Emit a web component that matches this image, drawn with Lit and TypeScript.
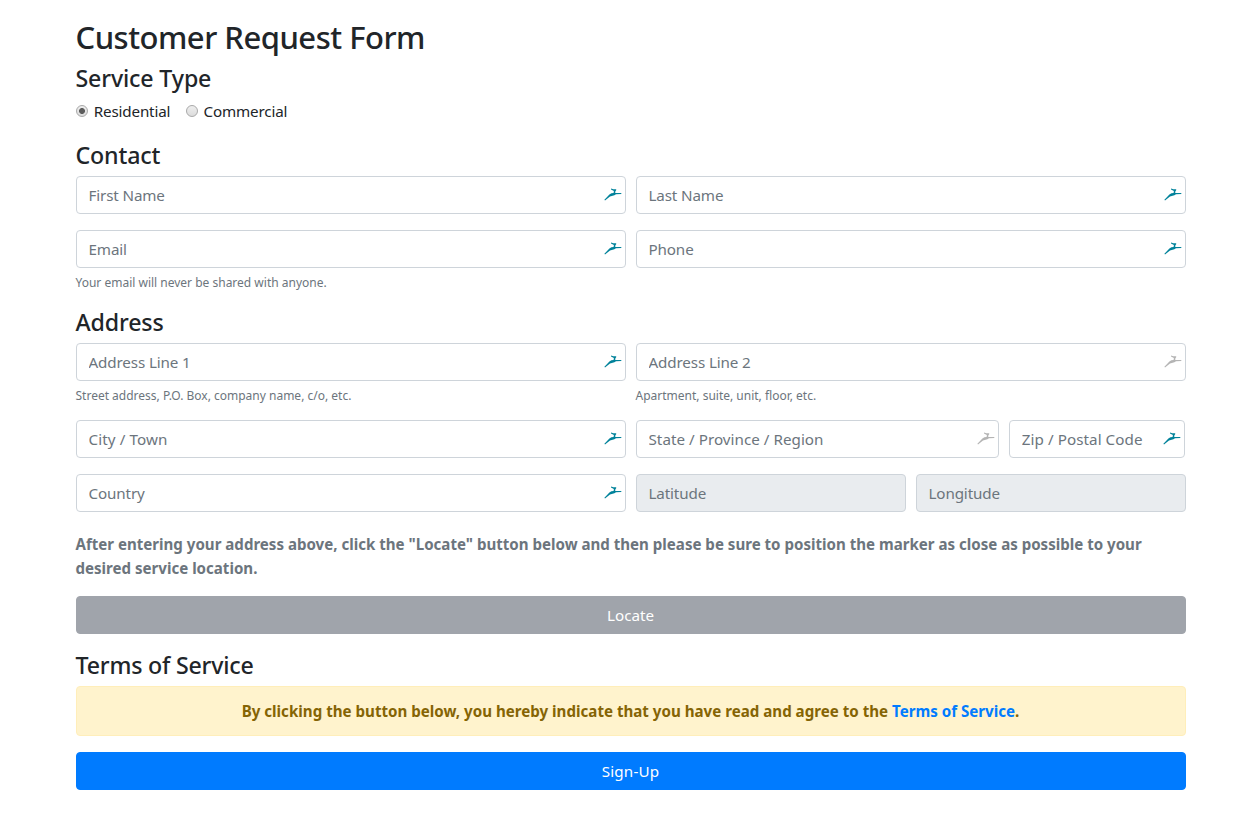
import { LitElement, html, css, nothing } from "lit";
import { customElement, property } from "lit/decorators.js";
import { classMap } from "lit/directives/class-map.js";
import { styleMap } from "lit/directives/style-map.js";

type Badge = "active" | "muted" | "none";

@customElement("form-field")
class FormField extends LitElement {
  @property() label = "";
  @property() hint = "";
  @property() badge: Badge = "active";
  @property({ type: Boolean }) locked = false;
  @property({ type: Number }) tracking = -0.13;

  static styles = css`
    :host { display: block; min-width: 0; }
    .box { display: grid; height: 38px; }
    .input {
      grid-area: 1 / 1;
      box-sizing: border-box;
      width: 100%;
      height: 38px;
      margin: 0;
      padding: 6px 12px;
      border: 1px solid #ced4da;
      border-radius: 4px;
      background: #fff;
      color: #495057;
      font: 400 15.2px/24px "Noto Sans", sans-serif;
      outline: none;
    }
    .input::placeholder { color: #6c757d; opacity: 1; }
    .locked { background: #e9ecef; }
    .bird {
      grid-area: 1 / 1;
      justify-self: end;
      margin: 12px 3.8px 0 0;
      width: 18px;
      height: 13px;
      color: #00829a;
      pointer-events: none;
    }
    .muted { color: #b4b4b4; }
    .hint {
      display: block;
      margin: 6px 0 -2px;
      color: #6c757d;
      font: 400 12px/18.4px "Noto Sans", sans-serif;
      white-space: nowrap;
    }
  `;

  render() {
    return html`
      <div class="box">
        <input
          class=${classMap({ input: true, locked: this.locked })}
          style=${styleMap({ letterSpacing: `${this.tracking}px` })}
          placeholder=${this.label}
          aria-label=${this.label}
          ?readonly=${this.locked}
        />
        ${this.badge === "none"
          ? nothing
          : html`<svg class=${classMap({ bird: true, muted: this.badge === "muted" })} viewBox="0 0 18 13">
              <path fill="currentColor" d="M7 .4 L9.4 1.2 L12.2 1.3 L12.2 2.3 L11.4 3.2 L11.2 5 L17.3 5 L17.3 6.1 L12 6.3 L10.4 7.3 L6 8.6 L1 12.4 L.4 11.8 L4 8 L5.4 6.4 L7.4 5.3 L9.6 5 L9.9 3 L7 1.4 Z" />
            </svg>`}
      </div>
      ${this.hint ? html`<small class="hint">${this.hint}</small>` : nothing}
    `;
  }
}

@customElement("app-root")
class AppRoot extends LitElement {
  static styles = css`
    :host {
      display: block;
      background: #fff;
      color: #212529;
      font: 400 15.2px/24px "Noto Sans", sans-serif;
    }
    .page { width: 1110px; margin-left: 75.5px; padding-top: 16px; }
    h2, h4, p { margin: 0; }
    h2 { padding-top: 4px; font-size: 31px; line-height: 34.4px; font-weight: 500; letter-spacing: -0.5px; margin-bottom: 8px; }
    h4 { padding-top: 4px; font-size: 23.2px; line-height: 24.8px; font-weight: 500; letter-spacing: -0.15px; margin-bottom: 8px; }
    .terms { padding-top: 3px; line-height: 25.8px; letter-spacing: -0.2px; }
    .radios { display: flex; gap: 15px; height: 24px; margin-bottom: 16px; letter-spacing: -.17px; }
    .radio { display: flex; align-items: center; gap: 6px; }
    .dot {
      appearance: none;
      box-sizing: border-box;
      width: 12px;
      height: 12px;
      margin: 0 0 0 .3px;
      border: 1px solid #a9a9a9;
      border-radius: 50%;
      background: linear-gradient(#eee, #dcdcdc);
    }
    .dot:checked { background: radial-gradient(circle, #5c5c5c 2.6px, transparent 3.3px), linear-gradient(#eee, #dcdcdc); }
    .row { display: flex; gap: 10px; margin-bottom: 16px; }
    .half { flex: 0 0 550px; }
    .state { flex: 0 0 363.33px; }
    .zip { flex: 0 0 176.4px; }
    .rest { flex: 1 1 0; }
    .note { margin: 20px 0 16px; color: #6c757d; font-size: 15.08px; font-weight: 700; }
    .btn {
      display: block;
      box-sizing: border-box;
      width: 100%;
      height: 38px;
      margin: 0 0 16px;
      padding: 6px 12px;
      border: 1px solid #007bff;
      border-radius: 4px;
      background: #007bff;
      color: #fff;
      font: inherit;
    }
    .primary { letter-spacing: .2px; }
    .disabled { background: #a0a4ab; border-color: #a0a4ab; }
    .alert {
      box-sizing: border-box;
      height: 50px;
      margin-bottom: 16px;
      padding: 12px 20px;
      border: 1px solid #ffeeba;
      border-radius: 4px;
      background: #fff3cd;
      color: #856404;
      font-size: 15.14px;
      font-weight: 700;
      text-align: center;
    }
    .link { color: #007bff; text-decoration: none; }
  `;

  render() {
    return html`
      <main class="page">
        <h2>Customer Request Form</h2>
        <h4>Service Type</h4>
        <div class="radios">
          <label class="radio"><input class="dot" type="radio" name="type" checked />Residential</label>
          <label class="radio"><input class="dot" type="radio" name="type" />Commercial</label>
        </div>

        <h4>Contact</h4>
        <div class="row">
          <form-field class="half" label="First Name"></form-field>
          <form-field class="half" label="Last Name"></form-field>
        </div>
        <div class="row">
          <form-field class="half" label="Email" hint="Your email will never be shared with anyone."></form-field>
          <form-field class="half" label="Phone"></form-field>
        </div>

        <h4>Address</h4>
        <div class="row">
          <form-field class="half" label="Address Line 1" hint="Street address, P.O. Box, company name, c/o, etc."></form-field>
          <form-field class="half" label="Address Line 2" badge="muted" hint="Apartment, suite, unit, floor, etc."></form-field>
        </div>
        <div class="row">
          <form-field class="half" label="City / Town" tracking="0.1"></form-field>
          <form-field class="state" label="State / Province / Region" badge="muted" tracking="0.03"></form-field>
          <form-field class="zip" label="Zip / Postal Code" tracking="0.06"></form-field>
        </div>
        <div class="row">
          <form-field class="half" label="Country"></form-field>
          <form-field class="rest" label="Latitude" badge="none" locked></form-field>
          <form-field class="rest" label="Longitude" badge="none" locked></form-field>
        </div>

        <p class="note">
          After entering your address above, click the "Locate" button below and then please be sure to position the
          marker as close as possible to your desired service location.
        </p>
        <button class="btn disabled" type="button">Locate</button>

        <h4 class="terms">Terms of Service</h4>
        <div class="alert">
          By clicking the button below, you hereby indicate that you have read and agree to the
          <a class="link" href="#">Terms of Service</a>.
        </div>
        <button class="btn primary" type="button">Sign-Up</button>
      </main>
    `;
  }
}
